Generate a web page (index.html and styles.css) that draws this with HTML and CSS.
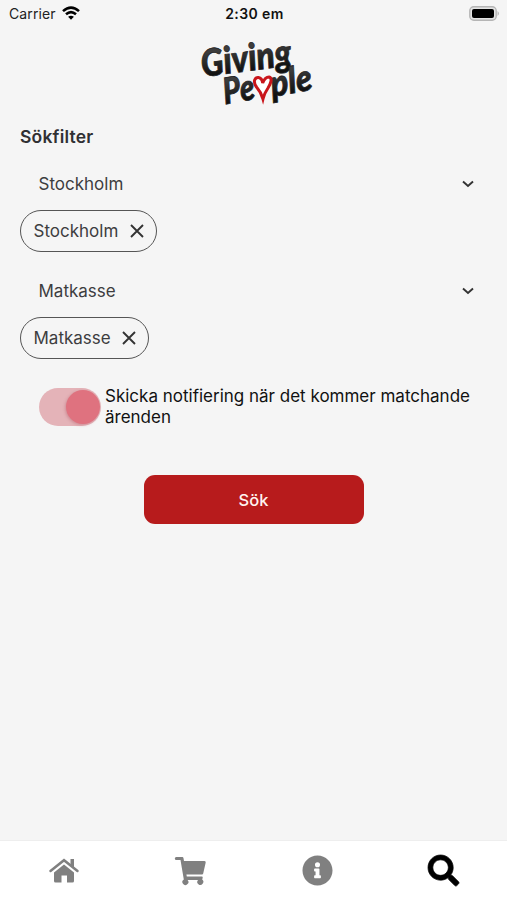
FILE: index.html
```html
<!DOCTYPE html>
<html lang="sv">
<head>
<meta charset="utf-8">
<title>Sökfilter</title>
<link rel="stylesheet" href="styles.css">
</head>
<body>
<div class="app">
  <header class="status">
    <div class="carrier"><span>Carrier</span>
      <svg width="18" height="14" viewBox="0 0 18 14" fill="none" stroke="#000" stroke-width="2.6"><path d="M1 5.1Q9-2 17 5.1M4 8.3Q9 4 14 8.3"/><path d="M9 13.8L6.1 10.8Q9 8.5 11.9 10.8Z" fill="#000" stroke="none"/></svg>
    </div>
    <div class="time">2:30 em</div>
    <svg class="battery" width="31" height="15" viewBox="0 0 31 15"><rect x=".8" y=".8" width="26.4" height="13.4" rx="4" fill="#e4e4e4" stroke="#b5b5b5" stroke-width="1.4"/><rect x="3" y="3" width="22" height="9" rx="2" fill="#000"/><path d="M28.6 5Q31 7.5 28.6 10Z" fill="#aaa"/></svg>
  </header>
  <div class="logo">
    <svg width="135" height="75" viewBox="0 0 135 75">
      <defs><linearGradient id="ink" x1="0" y1="0" x2="0" y2="1"><stop offset=".3" stop-color="#3d3d3d"/><stop offset=".8" stop-color="#111"/></linearGradient></defs>
      <g class="logo-text" fill="url(#ink)">
        <text transform="translate(13 42) skewY(-7.5) skewX(9)" font-size="38" textLength="90" lengthAdjust="spacingAndGlyphs">Giving</text>
        <text transform="translate(35 69.5) skewY(-10.5) skewX(9)" font-size="37" textLength="31" lengthAdjust="spacingAndGlyphs">Pe</text>
        <text transform="translate(82.500 62) skewY(-10.5) skewX(9)" font-size="37" textLength="41" lengthAdjust="spacingAndGlyphs">ple</text>
      </g>
      <path d="M73 64Q71 57 66.500 52C62.500 46.500 65 42 68.500 42.500Q72 43 72.700 48Q75 42 79 42C83 43 80.500 49 78 53Q74.500 58 73 64Z" fill="#fff" stroke="#c9151b" stroke-width="3"/>
    </svg>
  </div>
  <main>
    <h1>Sökfilter</h1>
    <section class="filter">
      <div class="select"><span>Stockholm</span><svg width="12" height="8" viewBox="0 0 12 8"><path d="M1 1.500L6 6L11 1.500"/></svg></div>
      <div class="chip"><span>Stockholm</span><svg width="14" height="14" viewBox="0 0 14 14"><path d="M1 1L13 13M13 1L1 13"/></svg></div>
    </section>
    <section class="filter">
      <div class="select"><span>Matkasse</span><svg width="12" height="8" viewBox="0 0 12 8"><path d="M1 1.500L6 6L11 1.500"/></svg></div>
      <div class="chip"><span>Matkasse</span><svg width="14" height="14" viewBox="0 0 14 14"><path d="M1 1L13 13M13 1L1 13"/></svg></div>
    </section>
    <div class="notify"><div class="switch"><i></i></div><p>Skicka notifiering när det kommer matchande ärenden</p></div>
    <button>Sök</button>
  </main>
  <nav>
    <a><svg width="30" height="25" viewBox="0 0 30 25"><path d="M5 14.500L15 6.500L25 14.500V23Q25 24.500 23.500 24.500H18V17.500H12.500V24.500H6.500Q5 24.500 5 23Z"/><path d="M1.500 13L15 2.200L28.500 13" fill="none" stroke="#808080" stroke-width="2.500" stroke-linecap="round"/><path d="M21.500 1H25V10.500L21.500 7.500Z"/></svg></a>
    <a><svg width="31" height="28" viewBox="0 0 31 28"><path d="M1.300 0H7.500Q8.200 0 8.500 1.300L9 4H29.500Q31 4 30.700 5.500L28.200 16.500Q28 17.500 27 17.500H11.400L11.800 19.500H26.800Q28 19.500 27.700 20.700L27.200 22.600A3 3 0 1 1 23 23H12.600A3 3 0 1 1 8.800 22.500L5.500 3H1.300A1.500 1.500 0 0 1 1.300 0Z"/></svg></a>
    <a><svg width="31" height="31" viewBox="0 0 512 512"><path d="M256 8C119 8 8 119.100 8 256c0 137 111 248 248 248s248-111 248-248C504 119.100 393 8 256 8zm0 110a42 42 0 1 1 0 84 42 42 0 0 1 0-84zm56 254a12 12 0 0 1-12 12h-88a12 12 0 0 1-12-12v-24a12 12 0 0 1 12-12h12v-64h-12a12 12 0 0 1-12-12v-24a12 12 0 0 1 12-12h64a12 12 0 0 1 12 12v100h12a12 12 0 0 1 12 12z"/></svg></a>
    <a class="active"><svg width="31" height="31" viewBox="0 0 512 512"><path stroke="#000" stroke-width="12" d="M505 442.700L405.300 343c-4.500-4.500-10.600-7-17-7H372c27.600-35.300 44-79.700 44-128C416 93.100 322.900 0 208 0S0 93.100 0 208s93.100 208 208 208c48.300 0 92.700-16.400 128-44v16.300c0 6.400 2.500 12.500 7 17l99.700 99.700c9.400 9.400 24.600 9.400 33.900 0l28.300-28.300c9.400-9.400 9.400-24.600.1-34zM208 336c-70.700 0-128-57.200-128-128 0-70.700 57.200-128 128-128 70.700 0 128 57.200 128 128 0 70.700-57.200 128-128 128z"/></svg></a>
  </nav>
</div>
</body>
</html>
```
FILE: styles.css
```css
* { box-sizing: border-box; }
body { margin: 0; background: #f5f5f5; font-family: Inter, "Liberation Sans", sans-serif; color: #3d3d3f; }
.app { height: 900px; display: flex; flex-direction: column; }
.status { height: 35px; padding: 6px 7px 0 9px; display: grid; grid-template-columns: 1fr auto 1fr; align-items: start; font-size: 14px; line-height: 16px; color: #222; }
.carrier { display: flex; gap: 6px; letter-spacing: .1px; }
.time { font-weight: 600; color: #111; font-size: 14px; letter-spacing: .4px; }
.battery { justify-self: end; }
.logo { height: 75px; padding-left: 190px; }
.logo svg { display: block; overflow: visible; }
.logo-text { font-family: Lato, sans-serif; font-weight: 900; font-style: italic; stroke: #222; stroke-width: .8px; }
main { flex: 1; padding: 16px 20px 0; font-size: 17px; line-height: 22px; }
h1 { margin: 0; font-size: 17.500px; line-height: 22px; font-weight: 600; letter-spacing: .2px; color: #303033; }
.filter { margin-top: 15px; height: 92.500px; }
.select { height: 40px; padding: 1px 13px 0 18.500px; display: flex; align-items: center; justify-content: space-between; }
.select svg, .chip svg { fill: none; stroke: #333; stroke-width: 1.900; }
.chip { width: fit-content; height: 42px; margin-top: 7px; padding: 0 11.500px 0 12.500px; border: 1.500px solid #555; border-radius: 21px; display: flex; align-items: center; gap: 12px; }
.filter + .filter .chip { margin-top: 6.500px; gap: 11.500px; }
.notify { margin: 23px 0 0 19px; display: flex; align-items: center; gap: 4px; color: #111; line-height: 21px; }
.switch { width: 62px; height: 38px; padding: 2px 1px; border-radius: 19px; background: #e4b3b8; display: flex; justify-content: flex-end; flex: none; }
.switch i { width: 34px; height: 34px; border-radius: 50%; background: #df727f; box-shadow: -1px 1px 3px #bb65707a; }
.notify p { margin: 0; width: 380px; }
button { display: block; width: 220px; height: 49px; margin: 47px auto 0; border: 0; border-radius: 11px; background: #b71b1c; color: #fff3f0; font: 500 16.500px Inter, sans-serif; }
nav { height: 60px; background: #fff; border-top: 1px solid #eee; padding-left: 1px; display: grid; grid-template-columns: repeat(4, 1fr); }
nav a { display: flex; align-items: center; justify-content: center; fill: #808080; }
nav svg { overflow: visible; }
nav .active { fill: #000; }
```
